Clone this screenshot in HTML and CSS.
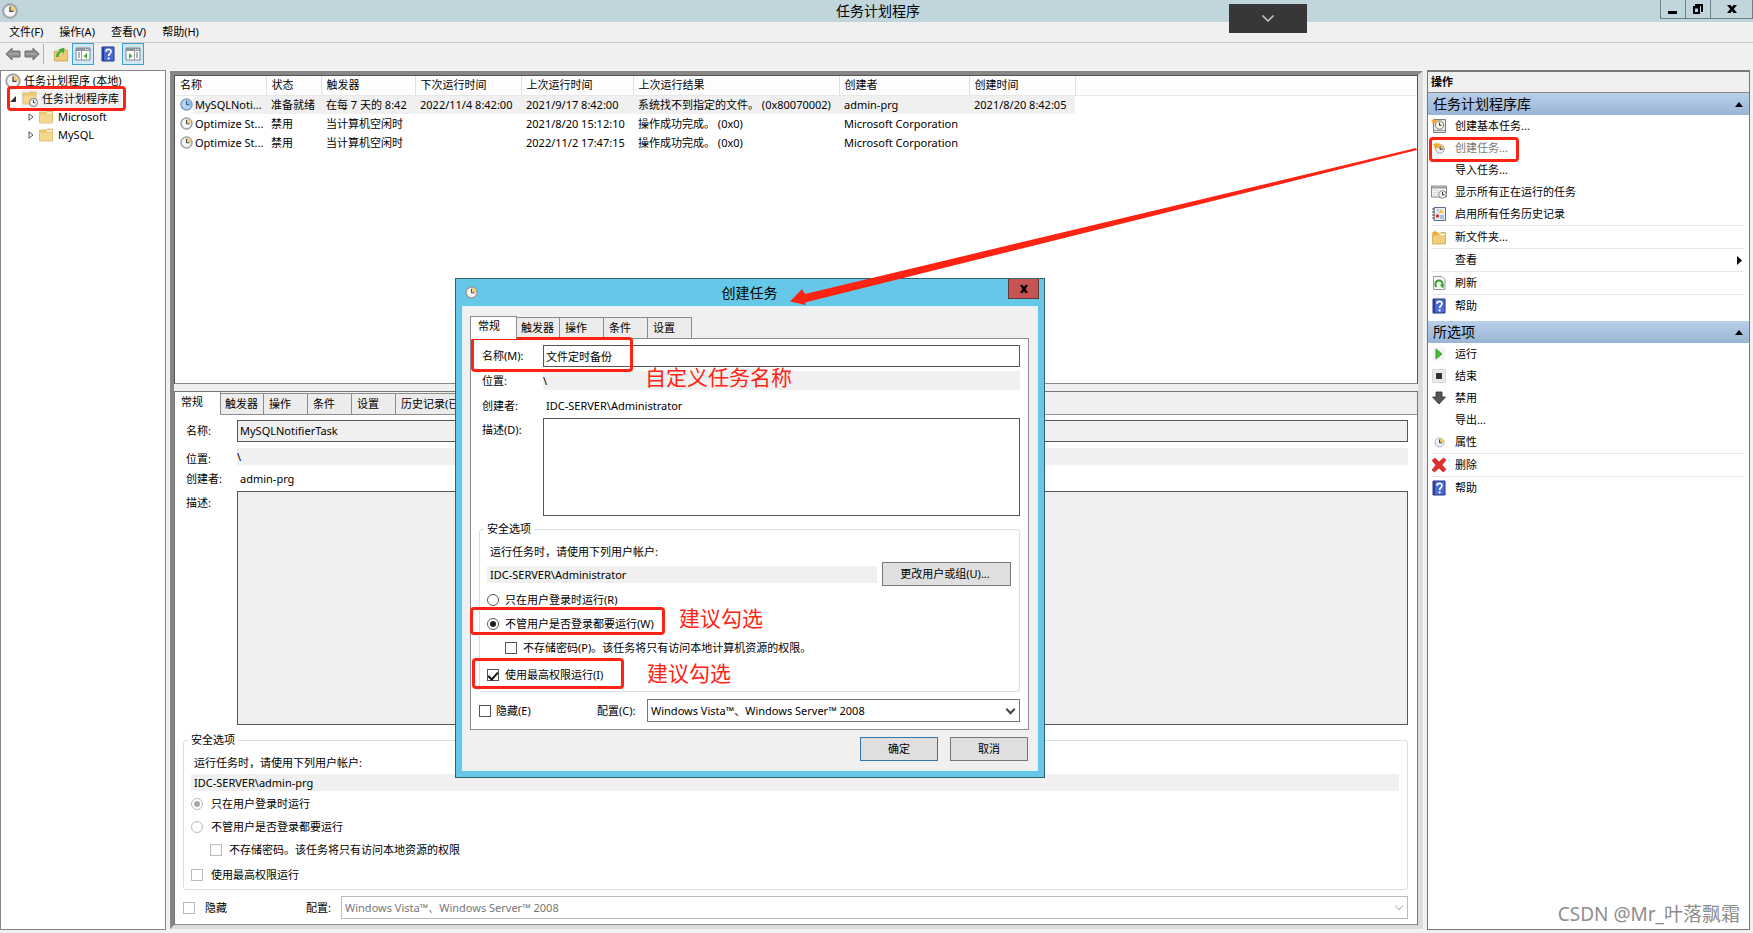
FILE: index.html
```html
<!DOCTYPE html>
<html lang="zh-CN">
<head>
<meta charset="utf-8">
<title>任务计划程序</title>
<link rel="stylesheet" href="styles.css">
</head>
<body>
<svg class="sprite" aria-hidden="true">
  <symbol id="i-clock" viewBox="0 0 16 16"><circle cx="8" cy="8" r="7.2" fill="#b4b4b4" stroke="#868686" stroke-width=".8"/><circle cx="8" cy="8" r="5.6" fill="#f4f6f8"/><path d="M8 8V2.4A5.6 5.6 0 0 1 13.6 8Z" fill="#f3cf7c"/><path d="M8 3.6V8.4H11.6" fill="none" stroke="#444" stroke-width="1.2"/></symbol>
  <symbol id="i-clock-blue" viewBox="0 0 16 16"><circle cx="8" cy="8" r="7.2" fill="#8fabcb" stroke="#6686aa" stroke-width=".8"/><circle cx="8" cy="8" r="5.6" fill="#b4d8f6"/><path d="M8 8V2.4A5.6 5.6 0 0 1 13.6 8Z" fill="#8fc2ee"/><path d="M8 3.6V8.4H11.6" fill="none" stroke="#2c4a6e" stroke-width="1.2"/></symbol>
  <symbol id="i-folder" viewBox="0 0 16 16"><path d="M1.5 3H8.500L9.500 2H14.500V14H1.500Z" fill="#eccb74" stroke="#d6b66c" stroke-width=".8"/><path d="M9 4H14" stroke="#fff" stroke-width="1.400"/><path d="M2 6H14V13.500H2Z" fill="#f3d88d"/></symbol>
  <symbol id="i-library" viewBox="0 0 16 16"><path d="M1 2H7L8 1H14V13H1Z" fill="#edcb74" stroke="#d6b66c" stroke-width=".8"/><path d="M1.500 5H13.500V12.500H1.500Z" fill="#f3d88d"/><circle cx="11.500" cy="11.500" r="4" fill="#f2f5f8" stroke="#777"/><path d="M11.500 9V11.800H13.500" fill="none" stroke="#345"/></symbol>
  <symbol id="i-help" viewBox="0 0 16 16"><path d="M2 1H14V15H2Z" fill="#4a6cd6" stroke="#24377f"/><path d="M2.500 1.500H4V14.500H2.500Z" fill="#22389b"/><path d="M6 5.800C6 2.600 11 2.600 11 5.600C11 7.600 8.600 7.600 8.600 10" fill="none" stroke="#fff" stroke-width="1.700"/><circle cx="8.600" cy="12.400" r="1.100" fill="#fff"/></symbol>
  <symbol id="i-back" viewBox="0 0 16 16"><path d="M.8 8 7 2V5H15V11H7V14Z" fill="#8d8d8d" stroke="#707070" stroke-width="1"/><path d="M4 8H14" stroke="#b5b5b5"/></symbol>
  <symbol id="i-up" viewBox="0 0 16 16"><path d="M1.500 5H8L9 4H14.500V15H1.500Z" fill="#edcb74" stroke="#c9a354" stroke-width=".8"/><path d="M3 11C3 7 5 5 7 5.500L5.500 3.500 11.500 1.500 11 7.500 9 6C7 6 6 8 5.500 11Z" fill="#3cae38"/></symbol>
  <symbol id="i-pane-left" viewBox="0 0 16 16"><path d="M1 2H15V14H1Z" fill="#fff" stroke="#80868f"/><path d="M1 2H15V5H1Z" fill="#8e949e"/><path d="M10 3.500H14" stroke="#fff" stroke-dasharray="1 .7"/><path d="M3 7H5M3 9H5M3 11H5" stroke="#607080"/><path d="M6.500 5V14" stroke="#999"/><path d="M12 7V13L8.500 10Z" fill="#43b02f"/></symbol>
  <symbol id="i-pane-right" viewBox="0 0 16 16"><path d="M1 2H15V14H1Z" fill="#fff" stroke="#80868f"/><path d="M1 2H15V5H1Z" fill="#8e949e"/><path d="M10 3.500H14" stroke="#fff" stroke-dasharray="1 .7"/><path d="M11 7H13M11 9H13M11 11H13" stroke="#607080"/><path d="M9.500 5V14" stroke="#999"/><path d="M4 7V13L7.500 10Z" fill="#43b02f"/></symbol>
  <symbol id="i-basic" viewBox="0 0 16 16"><path d="M2.500 1.500H14.500V14.500H2.500Z" fill="#ececec" stroke="#7a7a7a"/><path d="M2 12.500H14" stroke="#999"/><circle cx="8.500" cy="7" r="4.200" fill="#f6f3e6" stroke="#777"/><path d="M8.500 4.500V7.300H10.500" fill="none" stroke="#333"/><path d="M3 0 4 2.200 6.500 2 4.800 3.800 5.500 6 3.200 4.800 1 6 1.600 3.700 0 2 2.300 2.200Z" fill="#f4a21c"/></symbol>
  <symbol id="i-new" viewBox="0 0 16 16"><circle cx="9" cy="9" r="4.300" fill="#f3f0e4" stroke="#9aa5b1"/><path d="M9 9V5A4 4 0 0 1 13 9Z" fill="#efc160"/><path d="M9 6V9.300H12" fill="none" stroke="#345"/><path d="M4.500 2 5.500 3.500 9 3.500 7.500 6 7.500 8 5 7.500 3 9 3.500 6 2 4 4 4Z" fill="#f4a21c"/></symbol>
  <symbol id="i-running" viewBox="0 0 16 16"><path d="M.5 2H15.500V13H.5Z" fill="#f3f3f3" stroke="#888"/><path d="M1 3.500H15" stroke="#9a9ea5" stroke-width="2"/><path d="M3 6V11M6 6V11" stroke="#aaa" stroke-dasharray="1"/><circle cx="11.500" cy="10.500" r="3.800" fill="#f4f1df" stroke="#889"/><path d="M11.500 8V10.800H13.500" fill="none" stroke="#234"/></symbol>
  <symbol id="i-history" viewBox="0 0 16 16"><path d="M3 1.500H14.500V14.500H3Z" fill="#e7edf7" stroke="#5b6d8d"/><path d="M1 3H4M1 6H4M1 9H4M1 12H4" stroke="#555"/><path d="M10 3 12.500 7H7.500Z" fill="#f5bd26"/><circle cx="6.500" cy="10" r="1.800" fill="#d2352c"/><path d="M6 4H8M9 10H13M9 12H13" stroke="#7791c3"/></symbol>
  <symbol id="i-newfolder" viewBox="0 0 16 16"><path d="M1.500 5H9L10 3.500H14.500V15H1.500Z" fill="#f0cf7c" stroke="#cda452" stroke-width=".8"/><path d="M9 5.500H14" stroke="#fff"/><path d="M4 1 5 3.200 8 3 6 4.800 6.500 7 4.200 5.800 2 7.500 2.600 4.700.5 3.500 3 3Z" fill="#f4a21c"/></symbol>
  <symbol id="i-refresh" viewBox="0 0 16 16"><path d="M2.500 1.500H11L14 4.500V14.500H2.500Z" fill="#f8f8f8" stroke="#999"/><path d="M5.500 12A3.700 3.700 0 1 1 10.500 12" fill="none" stroke="#2fa52c" stroke-width="2"/><path d="M8.500 9.500H12.500V13.500Z" fill="#2fa52c"/></symbol>
  <symbol id="i-run" viewBox="0 0 16 16"><path d="M1.500 1.500H14.500V14.500H1.500Z" fill="#f4f4f4"/><path d="M5 3V13L11 8Z" fill="#47bd35" stroke="#278e20" stroke-width=".8"/></symbol>
  <symbol id="i-stop" viewBox="0 0 16 16"><path d="M1.500 1.500H14.500V14.500H1.500Z" fill="#e9e9e9" stroke="#d8d8d8"/><path d="M5 5H11V11H5Z" fill="#333"/></symbol>
  <symbol id="i-down" viewBox="0 0 16 16"><path d="M5 2H11V7H14.500L8 14 1.500 7H5Z" fill="#555" stroke="#333" stroke-width=".8"/></symbol>
  <symbol id="i-props" viewBox="0 0 16 16"><circle cx="8.500" cy="8.500" r="4.500" fill="#eff3f7" stroke="#a3afbc"/><path d="M8.500 8.500V4.500A4 4 0 0 1 12.500 8.500Z" fill="#f0c562"/><path d="M8.500 5.500V8.800H11" fill="none" stroke="#345"/></symbol>
  <symbol id="i-delete" viewBox="0 0 16 16"><path d="M1 3.500 4 1 8 5 12.500 1 15 3 11 8 15 12.500 12 15 8 11 3.500 15 1 13 5 8Z" fill="#e0302b" stroke="#c13a34" stroke-width=".8"/></symbol>
</svg>

<header class="titlebar">
  <svg class="icon"><use href="#i-clock"/></svg>
  <h1 class="title">任务计划程序</h1>
  <div class="winctl">
    <button class="wbtn" aria-label="最小化"><svg width="12" height="12"><path d="M1 8H10V11H1Z"/></svg></button>
    <button class="wbtn" aria-label="还原"><svg width="12" height="12"><path d="M3 1H11V9H9V3H3ZM1 3H8V11H1ZM3 5.500V9H6V5.500Z" fill-rule="evenodd"/></svg></button>
    <button class="wbtn wclose" aria-label="关闭"><svg width="10" height="10"><path d="M0 1H3.500L5 3 6.500 1H10L6.800 5 10 9H6.500L5 7 3.500 9H0L3.200 5Z"/></svg></button>
  </div>
</header>
<button class="pulldown" aria-label="展开"><svg width="14" height="9"><path d="M1.500 1.500 7 7 12.500 1.500" fill="none" stroke="#ccc" stroke-width="1.500"/></svg></button>

<nav class="menubar">
  <button>文件(F)</button><button>操作(A)</button><button>查看(V)</button><button>帮助(H)</button>
</nav>
<div class="toolbar">
  <button aria-label="后退"><svg class="icon"><use href="#i-back"/></svg></button>
  <button aria-label="前进"><svg class="icon flip"><use href="#i-back"/></svg></button>
  <span class="tsep"></span>
  <button aria-label="向上"><svg class="icon"><use href="#i-up"/></svg></button>
  <button class="on" aria-label="控制台树"><svg class="icon"><use href="#i-pane-left"/></svg></button>
  <button aria-label="帮助"><svg class="icon"><use href="#i-help"/></svg></button>
  <button class="on" aria-label="操作窗格"><svg class="icon"><use href="#i-pane-right"/></svg></button>
</div>

<div class="workspace">
  <aside class="tree">
    <div class="node root"><svg class="icon"><use href="#i-clock"/></svg><span>任务计划程序 (本地)</span></div>
    <div class="node lib"><svg class="exp" viewBox="0 0 6 6"><path d="M6 0V6H0Z" fill="#333"/></svg><span class="sel"><svg class="icon"><use href="#i-library"/></svg><span>任务计划程序库</span></span></div>
    <div class="node child"><svg class="exp" viewBox="0 0 6 8"><path d="M1 .8V7.200L5 4Z" fill="#fff" stroke="#555"/></svg><svg class="icon"><use href="#i-folder"/></svg><span>Microsoft</span></div>
    <div class="node child"><svg class="exp" viewBox="0 0 6 8"><path d="M1 .8V7.200L5 4Z" fill="#fff" stroke="#555"/></svg><svg class="icon"><use href="#i-folder"/></svg><span>MySQL</span></div>
    <div class="mark mark-tree"></div>
  </aside>

  <main class="center">
    <section class="list">
      <table class="tasks">
        <colgroup><col class="c1"><col class="c2"><col class="c3"><col class="c4"><col class="c5"><col class="c6"><col class="c7"><col class="c8"><col></colgroup>
        <thead><tr><th>名称</th><th>状态</th><th>触发器</th><th>下次运行时间</th><th>上次运行时间</th><th>上次运行结果</th><th>创建者</th><th>创建时间</th><th></th></tr></thead>
        <tbody>
          <tr class="picked"><td><div class="cell"><svg class="icon"><use href="#i-clock-blue"/></svg><span>MySQLNoti...</span></div></td><td>准备就绪</td><td>在每 7 天的 8:42</td><td>2022/11/4 8:42:00</td><td>2021/9/17 8:42:00</td><td>系统找不到指定的文件。 (0x80070002)</td><td>admin-prg</td><td>2021/8/20 8:42:05</td><td></td></tr>
          <tr><td><div class="cell"><svg class="icon"><use href="#i-clock"/></svg><span>Optimize St...</span></div></td><td>禁用</td><td>当计算机空闲时</td><td></td><td>2021/8/20 15:12:10</td><td>操作成功完成。 (0x0)</td><td>Microsoft Corporation</td><td></td><td></td></tr>
          <tr><td><div class="cell"><svg class="icon"><use href="#i-clock"/></svg><span>Optimize St...</span></div></td><td>禁用</td><td>当计算机空闲时</td><td></td><td>2022/11/2 17:47:15</td><td>操作成功完成。 (0x0)</td><td>Microsoft Corporation</td><td></td><td></td></tr>
        </tbody>
      </table>
    </section>
    <section class="detail">
      <div class="tabs"><button class="tab active">常规</button><button class="tab">触发器</button><button class="tab">操作</button><button class="tab">条件</button><button class="tab">设置</button><button class="tab wide">历史记录(已禁用)</button></div>
      <form class="panel">
        <div class="row"><label class="lab" for="n1">名称:</label><input class="box" id="n1" value="MySQLNotifierTask" readonly></div>
        <div class="row loc"><span class="lab">位置:</span><output class="flat">\</output></div>
        <div class="row who"><span class="lab">创建者:</span><span class="val">admin-prg</span></div>
        <div class="row desc"><label class="lab" for="d1">描述:</label><textarea class="box" id="d1" readonly></textarea></div>
        <fieldset>
          <legend>安全选项</legend>
          <p class="hint">运行任务时，请使用下列用户帐户:</p>
          <div class="acct"><output class="flat">IDC-SERVER\admin-prg</output></div>
          <label class="opt"><input type="radio" name="r1" checked disabled>只在用户登录时运行</label>
          <label class="opt"><input type="radio" name="r1" disabled>不管用户是否登录都要运行</label>
          <label class="opt sub"><input type="checkbox" disabled>不存储密码。该任务将只有访问本地资源的权限</label>
          <label class="opt top"><input type="checkbox" disabled>使用最高权限运行</label>
        </fieldset>
        <div class="foot"><label class="opt"><input type="checkbox" disabled>隐藏</label><label class="cfg" for="s1">配置:</label><select id="s1" disabled><option>Windows Vista™、Windows Server™ 2008</option></select></div>
      </form>
    </section>
  </main>

  <aside class="actions">
    <h2 class="ahead">操作</h2>
    <h3 class="ghead">任务计划程序库<svg width="8" height="5"><path d="M4 0 8 5H0Z"/></svg></h3>
    <div class="group">
      <button class="act"><svg class="icon"><use href="#i-basic"/></svg>创建基本任务...</button>
      <button class="act dim"><svg class="icon"><use href="#i-new"/></svg>创建任务...</button>
      <button class="act"><span class="icon"></span>导入任务...</button>
      <button class="act"><svg class="icon"><use href="#i-running"/></svg>显示所有正在运行的任务</button>
      <button class="act"><svg class="icon"><use href="#i-history"/></svg>启用所有任务历史记录</button>
      <button class="act line"><svg class="icon"><use href="#i-newfolder"/></svg>新文件夹...</button>
      <button class="act line"><span class="icon"></span>查看<svg class="more" width="5" height="9"><path d="M0 0 5 4.500 0 9Z"/></svg></button>
      <button class="act line"><svg class="icon"><use href="#i-refresh"/></svg>刷新</button>
      <button class="act line"><svg class="icon"><use href="#i-help"/></svg>帮助</button>
      <div class="mark mark-act"></div>
    </div>
    <h3 class="ghead">所选项<svg width="8" height="5"><path d="M4 0 8 5H0Z"/></svg></h3>
    <div class="group">
      <button class="act"><svg class="icon"><use href="#i-run"/></svg>运行</button>
      <button class="act"><svg class="icon"><use href="#i-stop"/></svg>结束</button>
      <button class="act"><svg class="icon"><use href="#i-down"/></svg>禁用</button>
      <button class="act"><span class="icon"></span>导出...</button>
      <button class="act"><svg class="icon"><use href="#i-props"/></svg>属性</button>
      <button class="act line"><svg class="icon"><use href="#i-delete"/></svg>删除</button>
      <button class="act line"><svg class="icon"><use href="#i-help"/></svg>帮助</button>
    </div>
  </aside>
</div>

<div class="dialog" role="dialog" aria-label="创建任务">
  <div class="dtitle"><svg class="icon"><use href="#i-clock"/></svg><h2>创建任务</h2><button class="dclose" aria-label="关闭"><svg width="8" height="8"><path d="M0 0H2.700L4 2 5.300 0H8L5.500 4 8 8H5.300L4 6 2.700 8H0L2.500 4Z"/></svg></button></div>
  <form class="dbody">
    <div class="tabs"><button type="button" class="tab active">常规</button><button type="button" class="tab">触发器</button><button type="button" class="tab">操作</button><button type="button" class="tab">条件</button><button type="button" class="tab">设置</button></div>
    <div class="panel">
      <div class="row"><label class="lab" for="n2">名称(M):</label><input class="box" id="n2" value="文件定时备份"></div>
      <div class="row loc"><span class="lab">位置:</span><output class="flat">\</output></div>
      <div class="row who"><span class="lab">创建者:</span><span class="val">IDC-SERVER\Administrator</span></div>
      <div class="row desc"><label class="lab" for="d2">描述(D):</label><textarea class="box" id="d2"></textarea></div>
      <fieldset>
        <legend>安全选项</legend>
        <p class="hint">运行任务时，请使用下列用户帐户:</p>
        <div class="acct"><output class="flat">IDC-SERVER\Administrator</output><button type="button" class="btn change">更改用户或组(U)...</button></div>
        <label class="opt"><input type="radio" name="r2">只在用户登录时运行(R)</label>
        <label class="opt"><input type="radio" name="r2" checked>不管用户是否登录都要运行(W)</label>
        <label class="opt sub"><input type="checkbox">不存储密码(P)。该任务将只有访问本地计算机资源的权限。</label>
        <label class="opt top"><input type="checkbox" checked>使用最高权限运行(I)</label>
      </fieldset>
      <div class="foot"><label class="opt"><input type="checkbox">隐藏(E)</label><label class="cfg" for="s2">配置(C):</label><select id="s2"><option>Windows Vista™、Windows Server™ 2008</option></select></div>
    </div>
    <div class="buttons"><button type="button" class="btn ok">确定</button><button type="button" class="btn">取消</button></div>
  </form>
  <div class="mark mark-name"></div>
  <div class="mark mark-radio"></div>
  <div class="mark mark-admin"></div>
  <span class="note note-name">自定义任务名称</span>
  <span class="note note-radio">建议勾选</span>
  <span class="note note-admin">建议勾选</span>
</div>
<svg class="arrow" width="627" height="157" viewBox="0 0 627 157" aria-hidden="true"><path d="M0 153.500 12 141 15 146 626 0 627 2 15 154.500 16 157Z" fill="#ff2313"/></svg>
<span class="watermark">CSDN @Mr_叶落飘霜</span>
</body>
</html>
```

FILE: styles.css
```css
* { box-sizing: border-box; }
body {
  margin: 0;
  min-height: 100vh;
  display: flex;
  flex-direction: column;
  position: relative;
  background: #f0f0f0;
  color: #000;
  font: 11px/16px "Noto Sans", "Noto Sans CJK SC", sans-serif;
  overflow: hidden;
}
button, input, textarea, select { font: inherit; color: inherit; margin: 0; }
button { border: 0; padding: 0; background: none; }
h1, h2, h3, p { margin: 0; font-weight: 400; }
.sprite { display: none; }
.icon { width: 16px; height: 16px; flex: none; }
.flip { transform: scaleX(-1); }

/* main window chrome */
.titlebar { display: flex; align-items: center; height: 22px; background: #c0d5dc; padding: 0 0 0 2px; }
.title { flex: 1; text-align: center; font-size: 14px; line-height: 22px; padding-left: 78px; }
.winctl { display: flex; align-self: flex-start; border: 1px solid #6f7f86; border-top: 0; }
.wbtn { width: 25px; height: 18px; display: flex; align-items: center; justify-content: center; border-right: 1px solid #6f7f86; }
.wclose { width: 41px; border-right: 0; }
.pulldown { position: absolute; left: 70.1%; top: 4px; width: 78px; height: 29px; background: #373737; display: flex; align-items: center; justify-content: center; }
.menubar { display: flex; gap: 16px; height: 21px; padding-left: 9px; border-bottom: 1px solid #c9c9c9; }
.toolbar { display: flex; align-items: center; height: 27px; padding: 0 4px 5px; }
.toolbar button { width: 22px; height: 22px; display: flex; align-items: center; justify-content: center; }
.toolbar button:first-child { width: 17px; }
.toolbar button:nth-child(6) { margin: 0 3px; }
.toolbar .on { border: 1px solid #3ea0d3; background: #cfe8f5; }
.tsep { width: 1px; height: 20px; background: #b0b0b0; margin-right: 6px; }

.workspace { flex: 1; display: flex; padding-bottom: 3px; }

/* console tree */
.tree { width: 166px; flex: none; position: relative; background: #fff; border: 1px solid #828790; padding-top: 1px; margin-right: 3px; }
.node { display: flex; align-items: center; height: 18px; }
.root { padding-left: 4px; gap: 3px; }
.lib { padding-left: 9px; gap: 5px; }
.lib .exp { width: 6px; height: 6px; }
.sel { display: flex; align-items: center; gap: 4px; background: #f0f0f0; padding: 0 3px 0 1px; height: 18px; }
.child { padding-left: 27px; }
.child .exp { width: 6px; height: 8px; margin-right: 4px; }
.child .icon { margin-right: 4px; }

/* task list and detail pane */
.center {
  flex: 1; min-width: 0; display: flex; flex-direction: column;
  border-style: solid; border-width: 5px 6px 5px 5px;
  border-color: #868686 #dcdcdc #dcdcdc #868686;
  outline: 1px solid #f6f6f6; outline-offset: -1px;
}
.list { height: 309px; background: #fff; border: 1px solid #555; border-bottom-color: #888; overflow: hidden; }
.tasks { table-layout: fixed; border-collapse: collapse; width: 100%; }
.c1 { width: 91px; } .c2 { width: 55px; } .c3 { width: 94px; } .c4 { width: 106px; }
.c5 { width: 112px; } .c6 { width: 206px; } .c7 { width: 130px; } .c8 { width: 106px; }
.tasks th, .tasks td { height: 19px; padding: 0 0 0 5px; text-align: left; font-weight: 400; white-space: nowrap; overflow: hidden; }
.tasks th { border-right: 1px solid #e0e0e0; border-bottom: 1px solid #e8e8e8; background: #fdfdfd; }
.tasks th:last-child { border-right: 0; }
.cell { display: flex; align-items: center; gap: 2px; }
.cell .icon { width: 13px; height: 13px; }
.picked td { background: #f0f0f0; }
.picked td:first-child { background: linear-gradient(90deg, #fff 18px, #f0f0f0 18px); }
.picked td:last-child { background: #fff; }

.detail { flex: 1; display: flex; flex-direction: column; margin-top: 7px; border: 1px solid #777; border-bottom: 0; }
.tabs { display: flex; align-items: flex-end; height: 22px; }
.tab { width: 44px; height: 21px; text-align: left; padding: 0 0 1px 5px; background: #ececec; border: 1px solid #8c8c8c; border-left-width: 0; border-bottom: 0; white-space: nowrap; }
.tab:nth-child(2) { width: 43px; padding-left: 4px; }
.tab.active { width: 47px; height: 23px; padding: 0 0 4px 7px; background: #fff; border-left-width: 1px; position: relative; z-index: 1; margin-bottom: -1px; }
.tab.wide { width: 100px; }
.panel { display: flex; flex-direction: column; background: #fff; border: 1px solid #8c8c8c; }
.detail .panel { flex: 1; border-left: 0; border-right: 0; padding: 5px 9px 5px 8px; }
.detail .tab.active { width: 46px; padding-left: 6px; border-left: 0; border-top: 0; }

/* form rows shared by the pane and the dialog */
.row { display: flex; align-items: center; padding-left: 3px; }
.lab { width: 51px; flex: none; }
.box { flex: 1; min-width: 0; height: 22px; border: 1px solid #555; border-radius: 0; background: #fff; padding: 0 2px 1px; outline: 0; resize: none; }
.detail .box { background: #f0f0f0; }
.flat { flex: 1; background: #f0f0f0; height: 17px; line-height: 17px; }
.loc { margin-top: 6px; }
.detail .loc .lab { padding-top: 3px; margin-bottom: -2px; }
.who { margin-top: 8px; }
.detail .who { margin-top: 6px; }
.val { padding-left: 3px; }
.desc { margin-top: 4px; align-items: stretch; }
.desc .lab { padding-top: 4px; }
.desc .box { height: auto; }
.detail .desc { flex: 1; }
fieldset { margin: 7px 0 0; padding: 7px 8px 6px 7px; border: 1px solid #d5dfe5; border-radius: 3px; min-width: 0; }
legend { padding: 0 3px; margin-left: -3px; }
.hint { padding-left: 3px; }
.acct { display: flex; align-items: center; margin-top: 3px; }
.acct .flat { padding-left: 3px; }
.opt { display: flex; align-items: center; gap: 8px; height: 16px; margin-top: 7px; white-space: nowrap; }
.acct + .opt { margin-top: 5px; }
.sub { margin-left: 19px; gap: 7px; }
.opt.top { margin-top: 9px; }
.opt input { appearance: none; flex: none; width: 12px; height: 12px; border: 1px solid #555; background: #fff; display: grid; place-items: center; }
.opt input[type="radio"] { border-radius: 50%; }
.opt input[type="radio"]:checked::before { content: ""; width: 6px; height: 6px; border-radius: 50%; background: #222; }
.opt input[type="checkbox"]:checked::before { content: ""; width: 4px; height: 8px; border: solid #111; border-width: 0 2px 2px 0; transform: rotate(42deg); margin-bottom: 2px; }
.opt input:disabled { border-color: #bbb; }
.opt input[type="radio"]:disabled:checked::before { background: #aaa; }
.foot { display: flex; align-items: center; position: relative; margin-top: 6px; }
.foot .opt { margin: 0; gap: 10px; }
.foot select { flex: 1; min-width: 0; appearance: none; height: 23px; border: 1px solid #777; border-radius: 0; padding: 0 3px; background: #fff; outline: 0; }
.foot::after { content: ""; width: 5px; height: 5px; border: solid #444; border-width: 0 2px 2px 0; transform: rotate(45deg); position: absolute; right: 6px; top: 7px; pointer-events: none; }
.detail .foot::after { border-color: #bbb; border-width: 0 1px 1px 0; }
.detail .foot .opt { width: 123px; }
.detail .cfg { width: 35px; }
.detail .foot select { color: #777; border-color: #bbb; opacity: 1; }

/* actions pane */
.actions { width: 323px; flex: none; margin: 0 3px; background: #fff; border: 1px solid #777; border-top-width: 2px; }
.ahead { height: 21px; padding-left: 3px; font-size: 11px; line-height: 19px; font-weight: 700; background: #f0f0f0; border-bottom: 1px solid #888; }
.ghead { display: flex; align-items: center; justify-content: space-between; height: 22px; padding: 0 6px 0 5px; font-size: 14px; line-height: 22px; background: linear-gradient(#b9d0ea, #99b4d4); }
.group { position: relative; padding: 0 5px 4px 3px; }
.act { display: flex; align-items: center; gap: 8px; width: 100%; height: 22px; text-align: left; }
.act.line { height: 23px; border-top: 1px solid #e6e6e6; }
.act.dim { color: #777; }
.more { margin-left: auto; margin-right: 2px; }

/* create task dialog */
.dialog { position: absolute; left: 455px; top: 278px; width: 590px; background: #66c8e8; border: 1px solid #35616f; padding: 0 6px 6px; }
.dtitle { display: flex; align-items: center; height: 27px; padding-left: 3px; margin-right: -1px; }
.dtitle h2 { flex: 1; text-align: center; font-size: 14px; line-height: 26px; padding-left: 13px; }
.dtitle .icon { width: 13px; height: 13px; }
.dclose { align-self: flex-start; width: 31px; height: 20px; background: #c75450; border: 1px solid #5c3a3a; border-top: 0; display: flex; align-items: center; justify-content: center; }
.dbody { background: #f0f0f0; border: 1px solid #dff2f9; padding: 9px 8px 9px 7px; }
.dbody .panel { padding: 6px 8px 7px; }
.dbody .lab { width: 61px; }
.dbody .flat { height: 19px; line-height: 19px; }
.dbody .loc { margin-top: 4px; }
.dbody .desc { margin-top: 4px; }
.dbody .desc .box { height: 98px; }
.dbody fieldset { margin-top: 5px; padding-bottom: 8px; }
.dbody .acct { margin-top: 2px; gap: 5px; }
.dbody .acct .flat { height: 17px; line-height: 17px; }
.dbody .opt { margin-top: 8px; gap: 6px; }
.dbody .acct + .opt { margin-top: 6px; }
.dbody .sub { margin-left: 18px; }
.dbody .opt.top { margin-top: 11px; }
.btn { width: 78px; height: 24px; background: #dfdfdf; border: 1px solid #777; }
.change { width: 129px; padding-right: 3px; }
.btn.ok { border-color: #3278b0; }
.dbody .foot { margin-top: 7px; }
.dbody .foot .opt { margin: 0; gap: 5px; width: 118px; }
.dbody .cfg { width: 50px; }
.buttons { display: flex; justify-content: flex-end; gap: 12px; margin-top: 7px; padding-right: 1px; }

/* annotations */
.mark { position: absolute; border: 3px solid #ff2313; border-radius: 4px; pointer-events: none; }
.mark-tree { left: 6px; top: 15px; width: 119px; height: 25px; }
.mark-act { left: 1px; top: 22px; width: 90px; height: 25px; }
.mark-name { left: 15px; top: 58px; width: 162px; height: 35px; }
.mark-radio { left: 14px; top: 328px; width: 195px; height: 28px; }
.mark-admin { left: 16px; top: 379px; width: 152px; height: 31px; }
.note { position: absolute; color: #ff2313; font-size: 21px; line-height: 24px; white-space: nowrap; }
.note-name { left: 189px; top: 86px; }
.note-radio { left: 223px; top: 327px; }
.note-admin { left: 191px; top: 382px; }
.arrow { position: absolute; left: 790px; top: 148px; pointer-events: none; }
.watermark { position: absolute; right: 13px; bottom: 6px; font-size: 19px; line-height: 26px; color: #8d8d8d; white-space: nowrap; }
```
